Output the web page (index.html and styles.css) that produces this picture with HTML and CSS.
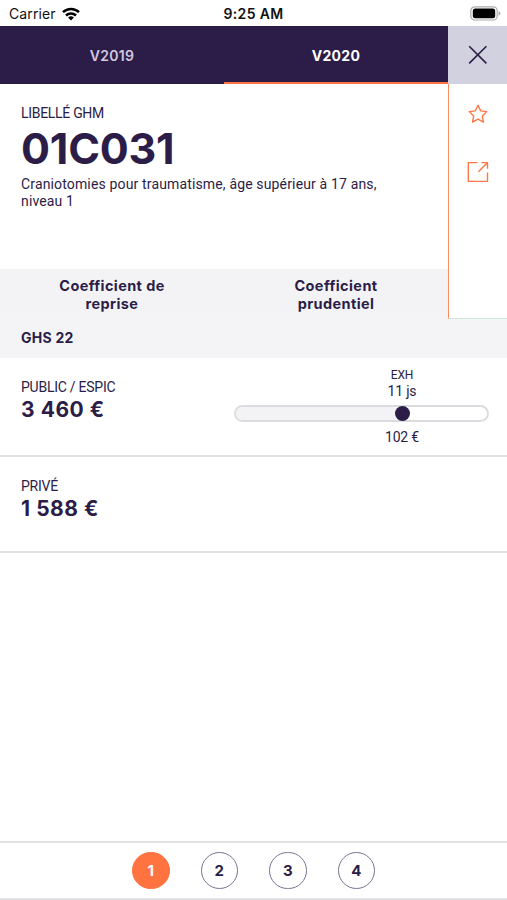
FILE: index.html
```html
<!DOCTYPE html>
<html lang="fr">
<head>
<meta charset="utf-8">
<title>GHM 01C031</title>
<link rel="stylesheet" href="styles.css">
</head>
<body>
<div class="status">
  <div class="carrier"><span class="carrier-name">Carrier</span>
    <svg width="18" height="14" viewBox="0 0 18 14"><g fill="none" stroke="#000" stroke-width="2.5"><path d="M1 5.2a11.4 11.4 0 0 1 16 0"/><path d="M4 8.5a7.2 7.2 0 0 1 10 0"/></g><path d="M6.1 10.6a4.2 4.2 0 0 1 5.8 0L9 13.6z"/></svg>
  </div>
  <div class="time">9:25 AM</div>
  <svg class="battery" width="31" height="15" viewBox="0 0 31 15"><rect x=".8" y=".8" width="26.4" height="13.2" rx="4" fill="#fff" stroke="#aaa" stroke-width="1.2"/><rect x="2.8" y="2.6" width="22.4" height="9.6" rx="2.5"/><path d="M28.6 5.2q1.8 .6 1.8 2.3t-1.8 2.3z" fill="#aaa"/></svg>
</div>
<div class="top">
  <div class="main">
    <div class="tabs">
      <div class="tab">V2019</div>
      <div class="tab active">V2020</div>
    </div>
    <div class="summary">
      <div class="label libelle">LIBELLÉ GHM</div>
      <h1>01C031</h1>
      <p>Craniotomies pour traumatisme, âge supérieur à 17 ans,<br>niveau 1</p>
    </div>
    <div class="coefs">
      <div>Coefficient de<br>reprise</div>
      <div>Coefficient<br>prudentiel</div>
    </div>
  </div>
  <div class="side">
    <div class="close"><svg width="20" height="20" viewBox="0 0 20 20" fill="none" stroke="#2b1d47" stroke-width="1.6"><path d="M1.2 1.2l17.2 17.2M18.4 1.2L1.2 18.4"/></svg></div>
    <div class="rail">
      <svg class="star" width="20" height="20" viewBox="0 0 20 20" fill="none" stroke="#ff7948" stroke-width="1.4" stroke-linejoin="round"><path d="M10 1.2l2.7 5.7 6.1.7-4.5 4.3 1.2 6.3L10 15.1l-5.5 3.1 1.2-6.3L1.2 7.6l6.1-.7z"/></svg>
      <svg class="share" width="22" height="22" viewBox="0 0 22 22" fill="none" stroke="#ff7948" stroke-width="1.4"><path d="M10.5 1.6H1.3v18.8h19.2v-9M11.4 10.8l9-9.1M14.4 1.6h6.1v6.2"/></svg>
    </div>
  </div>
</div>
<div class="ghs">GHS 22</div>
<section class="row public">
  <div>
    <div class="label">PUBLIC / ESPIC</div>
    <div class="price">3 460 €</div>
  </div>
  <div class="gauge">
    <div class="marker"><div class="exh">EXH</div><div class="days">11 js</div></div>
    <div class="track"><div class="fill"></div><div class="dot"></div></div>
    <div class="marker amount">102 €</div>
  </div>
</section>
<section class="row prive">
  <div>
    <div class="label">PRIVÉ</div>
    <div class="price">1 588 €</div>
  </div>
</section>
<nav class="pager">
  <span class="page current">1</span><span class="page">2</span><span class="page">3</span><span class="page">4</span>
</nav>
</body>
</html>
```
FILE: styles.css
```css
* { box-sizing: border-box; }
body {
  margin: 0;
  height: 900px;
  display: flex;
  flex-direction: column;
  overflow: hidden;
  background: #fff;
  color: #2b1d47;
  font-family: Roboto, sans-serif;
}
svg { display: block; flex: none; }
.status {
  height: 26px;
  flex: none;
  display: grid;
  grid-template-columns: 1fr auto 1fr;
  align-items: center;
  padding: 1px 6px 0 9px;
  color: #111;
  font-family: Inter, sans-serif;
}
.carrier { display: flex; align-items: center; gap: 6px; font-size: 14px; letter-spacing: .1px; }
.time { margin-right: 3px; font-size: 14px; font-weight: 600; letter-spacing: .35px; }
.battery { justify-self: end; }
.top { display: flex; height: 293px; flex: none; }
.main { width: 448px; display: flex; flex-direction: column; }
.tabs { display: flex; height: 58px; background: #2b1d47; }
.tab {
  flex: 1;
  display: flex;
  align-items: center;
  justify-content: center;
  padding-top: 2px;
  border-bottom: 2px solid transparent;
  font: 600 14px Inter, sans-serif;
  letter-spacing: .3px;
  color: #d2c8e2;
}
.tab.active { border-color: #ff7340; color: #fff; font-weight: 700; }
.summary { flex: 1; padding: 20px 20px 0 21px; }
.label { font-size: 14px; line-height: 18px; letter-spacing: -.25px; }
.libelle { letter-spacing: -.3px; }
h1 {
  margin: 1px 0 0;
  font: 700 43px/50px Inter, sans-serif;
  letter-spacing: -.2px;
}
p { margin: 3px 0 0; font-size: 14px; line-height: 17px; letter-spacing: .15px; white-space: nowrap; }
.coefs { height: 50px; display: flex; background: #f3f3f6; }
.coefs div {
  flex: 1;
  padding-top: 8px;
  text-align: center;
  font: 700 14.5px/17.5px Inter, sans-serif;
  letter-spacing: .4px;
}
.side { flex: 1; display: flex; flex-direction: column; }
.close { height: 58px; display: flex; align-items: center; justify-content: center; background: #d2d1df; }
.rail {
  flex: 1;
  display: flex;
  flex-direction: column;
  align-items: center;
  gap: 37px;
  padding-top: 20px;
  border-left: 1px solid #ff8b61;
  border-bottom: 1px solid #cfe6df;
}
.ghs {
  height: 39px;
  flex: none;
  padding: 10px 20px 0 21px;
  background: #f4f4f7;
  font: 700 14px/18px Inter, sans-serif;
  letter-spacing: .25px;
}
.row { flex: none; display: flex; justify-content: space-between; padding: 20px 18px 0 21px; border-bottom: 2px solid #e0e0e2; }
.public { height: 99px; }
.prive { height: 96px; }
.price { margin-top: 1px; font: 700 21px/26px Inter, sans-serif; letter-spacing: .55px; white-space: nowrap; }
.gauge { width: 255px; margin-top: -11px; }
.marker { width: 80px; margin-left: 128px; text-align: center; font-size: 14px; line-height: 16px; letter-spacing: -.2px; }
.exh { font-size: 12px; }
.track {
  display: flex;
  align-items: center;
  height: 17px;
  margin-top: 6px;
  border: 2px solid #dcdce0;
  border-radius: 9px;
}
.fill { width: 167px; height: 100%; background: #f3f3f6; border-radius: 7px 0 0 7px; }
.dot { flex: none; width: 15px; height: 15px; margin: 0 0 0 -8px; border-radius: 50%; background: #2b1d47; }
.amount { margin-top: 7px; }
.pager {
  height: 59px;
  flex: none;
  margin: auto 0 0;
  display: flex;
  justify-content: center;
  align-items: center;
  gap: 31px;
  border-top: 2px solid #e3e3e5;
  border-bottom: 2px solid #e3e3e5;
}
.page {
  width: 37.5px;
  height: 37.5px;
  display: flex;
  align-items: center;
  justify-content: center;
  border: 1px solid #7c7393;
  border-radius: 50%;
  font: 700 15px Inter, sans-serif;
}
.current { background: #ff7340; border-color: #ff7340; color: #fff; }
```
